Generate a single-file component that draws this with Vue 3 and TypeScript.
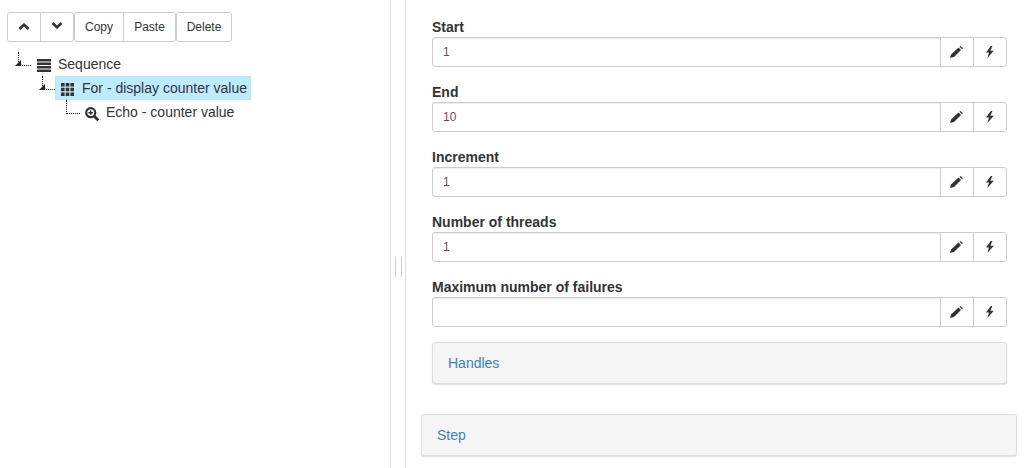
<template>
  <div class="page">
    <div class="left">
      <div class="toolbar">
        <div class="group">
          <button class="btn icon-btn">
            <svg width="12" height="12" viewBox="0 0 12 12"><path d="M6 2l5.500 5-2 2L6 5.600 2.500 9l-2-2z" fill="#333" /></svg>
          </button>
          <button class="btn icon-btn">
            <svg width="12" height="12" viewBox="0 0 12 12"><path d="M6 8l5.500-5-2-2L6 4.400 2.500 1l-2 2z" fill="#333" /></svg>
          </button>
        </div>
        <div class="group">
          <button class="btn copy">Copy</button>
          <button class="btn paste">Paste</button>
        </div>
        <div class="group">
          <button class="btn delete">Delete</button>
        </div>
      </div>

      <ul class="tree">
        <li class="node level-0">
          <span class="branch open"></span>
          <svg class="node-icon" width="14" height="13" viewBox="0 0 14 13">
            <path d="M0 0h14v2.500H0zM0 3.500h14V6H0zM0 7h14v2.500H0zM0 10.500h14V13H0z" fill="#333" />
          </svg>
          <span class="label">Sequence</span>
        </li>
        <li class="node level-1">
          <span class="branch open"></span>
          <span class="row selected">
            <svg class="node-icon" width="13" height="13" viewBox="0 0 13 13">
              <path d="M0 0h3.600v3.600H0zM4.700 0h3.600v3.600H4.700zM9.400 0H13v3.600H9.400zM0 4.700h3.600v3.600H0zM4.700 4.700h3.600v3.600H4.700zM9.400 4.700H13v3.600H9.400zM0 9.400h3.600V13H0zM4.700 9.400h3.600V13H4.700zM9.400 9.400H13V13H9.400z" fill="#333" />
            </svg>
            <span class="label">For - display counter value</span>
          </span>
        </li>
        <li class="node level-2">
          <span class="branch leaf"></span>
          <svg class="node-icon" width="14" height="14" viewBox="0 0 14 14">
            <circle cx="5.700" cy="5.700" r="4.500" fill="none" stroke="#333" stroke-width="2.200" />
            <path d="M9 9l4.300 4.300" stroke="#333" stroke-width="2.800" />
            <path d="M3.400 5.700h4.600M5.700 3.400V8" stroke="#333" stroke-width="1.400" />
          </svg>
          <span class="label">Echo - counter value</span>
        </li>
      </ul>
    </div>

    <div class="splitter"><span class="grip"></span></div>

    <div class="right">
      <div class="fields">
        <div v-for="field in fields" :key="field.name" class="field">
          <label>{{ field.name }}</label>
          <div class="input-group">
            <div class="input">{{ field.value }}</div>
            <button class="addon pencil">
              <svg width="13" height="12" viewBox="0 0 13 12"><path d="M0 12l1-3.500L8.500 1.400 11 4l-7 7zM9.500.7L10.500 0 13 2.200l-.9 1z" fill="#333" /></svg>
            </button>
            <button class="addon last">
              <svg width="10" height="12" viewBox="0 0 10 12"><path d="M5.800 0L1 6.400h3L2.400 12l6.400-7.300H5.400L7.400 0z" fill="#333" /></svg>
            </button>
          </div>
        </div>
      </div>
      <div class="panel inner">Handles</div>
      <div class="panel outer">Step</div>
    </div>
  </div>
</template>

<script setup lang="ts">
interface Field {
  name: string
  value: string
}

const fields: Field[] = [
  { name: 'Start', value: '1' },
  { name: 'End', value: '10' },
  { name: 'Increment', value: '1' },
  { name: 'Number of threads', value: '1' },
  { name: 'Maximum number of failures', value: '' },
]
</script>

<style>
html,
body {
  background: #fff;
  overflow: hidden;
}
</style>

<style scoped>
.page {
  display: flex;
  width: 1032px;
  height: 468px;
  overflow: hidden;
  font-family: "Liberation Sans", Arial, sans-serif;
  font-size: 14px;
  color: #333;
}

.left {
  flex: none;
  width: 391px;
  box-sizing: border-box;
  padding: 12px 0 0 7px;
  border-right: 1px solid #ddd;
}

.toolbar {
  display: flex;
}

.group {
  display: flex;
}

.btn {
  box-sizing: border-box;
  height: 30px;
  padding: 0;
  margin: 0;
  background: #fff;
  border: 1px solid #ccc;
  border-radius: 3px;
  font-family: inherit;
  font-size: 12px;
  color: #333;
  display: flex;
  align-items: center;
  justify-content: center;
}

.group .btn:not(:first-child) {
  margin-left: -1px;
  border-top-left-radius: 0;
  border-bottom-left-radius: 0;
}

.group .btn:not(:last-child) {
  border-top-right-radius: 0;
  border-bottom-right-radius: 0;
}

.icon-btn {
  width: 34px;
}

.copy {
  width: 50px;
}

.paste {
  width: 53px;
}

.delete {
  width: 56px;
}

.tree {
  list-style: none;
  margin: 10px 0 0;
  padding: 0;
}

.node {
  position: relative;
  display: flex;
  align-items: center;
  height: 24px;
  white-space: nowrap;
}

.level-0 {
  padding-left: 30px;
}

.level-1 {
  padding-left: 48px;
}

.level-2 {
  padding-left: 78px;
}

.node-icon {
  flex: none;
  margin-top: 3px;
}

.label {
  margin-left: 7px;
  color: #333;
}

.row {
  display: flex;
  align-items: center;
  height: 24px;
  padding: 0 4px 0 6px;
  background: #beebff;
  border-radius: 2px;
  box-shadow: inset 0 0 1px #999;
}

.row .label {
  margin-left: 8px;
}

.branch {
  position: absolute;
  top: 0;
  display: block;
  height: 13px;
  border-left: 1px dotted #111;
  border-bottom: 1px dotted #111;
}

.level-0 .branch {
  left: 11px;
  width: 12px;
}

.level-1 .branch {
  left: 35px;
  width: 12px;
}

.level-2 .branch {
  left: 59px;
  width: 13px;
}

.open::after {
  content: "";
  position: absolute;
  left: -4px;
  bottom: -1px;
  border-style: solid;
  border-width: 0 0 6px 6px;
  border-color: transparent transparent #222 transparent;
}

.splitter {
  position: relative;
  flex: none;
  width: 15px;
  box-sizing: border-box;
  border-right: 1px solid #ddd;
}

.grip {
  position: absolute;
  left: 4px;
  top: 257px;
  width: 5px;
  height: 20px;
  border-left: 1px solid #ccc;
  border-right: 1px solid #ccc;
}

.right {
  flex: none;
  width: 626px;
  box-sizing: border-box;
  padding: 0 15px;
}

.fields {
  display: flex;
  flex-direction: column;
  gap: 16px;
  padding: 18px 10px 0 11px;
}

label {
  display: block;
  height: 19px;
  line-height: 18px;
  font-weight: bold;
  color: #333;
}

.input-group {
  display: flex;
  height: 30px;
}

.input {
  flex: 1;
  box-sizing: border-box;
  height: 30px;
  line-height: 28px;
  padding-left: 10px;
  font-size: 12px;
  color: #7b3f5c;
  border: 1px solid #ccc;
  border-radius: 3px 0 0 3px;
  box-shadow: inset 0 1px 1px rgba(0, 0, 0, 0.075);
}

.addon {
  box-sizing: border-box;
  width: 34px;
  height: 30px;
  margin-left: -1px;
  padding: 0;
  background: #fff;
  border: 1px solid #ccc;
  display: flex;
  align-items: center;
  justify-content: center;
}

.addon.pencil svg {
  margin-left: -1px;
}

.addon.last {
  border-radius: 0 3px 3px 0;
}

.panel {
  box-sizing: border-box;
  height: 42px;
  line-height: 40px;
  padding-left: 15px;
  background: #f5f5f5;
  border: 1px solid #ddd;
  border-radius: 3px;
  box-shadow: 0 1px 1px rgba(0, 0, 0, 0.12);
  color: #3f80ba;
}

.inner {
  margin: 15px 10px 0 11px;
}

.outer {
  margin-top: 30px;
}
</style>
